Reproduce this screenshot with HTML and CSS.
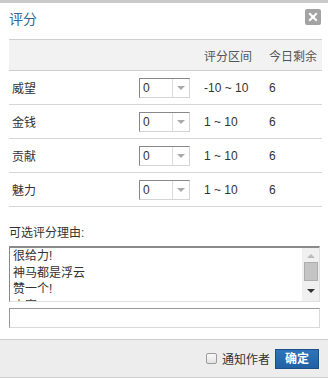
FILE: index.html
```html
<!DOCTYPE html>
<html>
<head>
<meta charset="utf-8">
<link rel="stylesheet" href="styles.css">
</head>
<body>
<div class="topbar"></div>
<div class="head">
  <span class="title">评分</span>
  <span class="close"><svg width="10" height="10" viewBox="0 0 10 10"><path d="M2 2 L8 8 M8 2 L2 8" stroke="#fff" stroke-width="2.2" stroke-linecap="square"/></svg></span>
</div>
<div class="table">
  <div class="row hdr">
    <span></span><span></span><span>评分区间</span><span>今日剩余</span>
  </div>
  <div class="row">
    <span class="lbl">威望</span>
    <span class="sel"><span class="val">0</span><span class="arr"></span></span>
    <span>-10 ~ 10</span><span>6</span>
  </div>
  <div class="row">
    <span class="lbl">金钱</span>
    <span class="sel"><span class="val">0</span><span class="arr"></span></span>
    <span>1 ~ 10</span><span>6</span>
  </div>
  <div class="row">
    <span class="lbl">贡献</span>
    <span class="sel"><span class="val">0</span><span class="arr"></span></span>
    <span>1 ~ 10</span><span>6</span>
  </div>
  <div class="row">
    <span class="lbl">魅力</span>
    <span class="sel"><span class="val">0</span><span class="arr"></span></span>
    <span>1 ~ 10</span><span>6</span>
  </div>
</div>
<div class="reason">
  <div class="rlabel">可选评分理由:</div>
  <div class="listbox">
    <div class="opts">
      <div>很给力!</div>
      <div>神马都是浮云</div>
      <div>赞一个!</div>
      <div>山寨</div>
    </div>
    <div class="sbar">
      <span class="up"></span>
      <span class="thumb"></span>
      <span class="down"></span>
    </div>
  </div>
  <div class="input"></div>
</div>
<div class="foot">
  <span class="chk"></span>
  <span class="notify">通知作者</span>
  <span class="btn">确定</span>
</div>
</body>
</html>
```
FILE: styles.css
```css
html, body {
  margin: 0;
  padding: 0;
  background: #fff;
}
body {
  font-family: "Liberation Sans", "Noto Sans CJK SC", sans-serif;
  font-size: 12px;
  color: #333;
  width: 328px;
}
.topbar {
  height: 3px;
  background: #c9c9c9;
}
.head {
  height: 36px;
  display: flex;
  align-items: center;
  justify-content: space-between;
  padding: 0 7px 0 9px;
}
.title {
  font-size: 14px;
  color: #336699;
  margin-top: -6px;
}
.close {
  width: 16px;
  height: 16px;
  background: #a3a3a3;
  border-radius: 2px;
  display: flex;
  align-items: center;
  justify-content: center;
  margin-top: -8px;
}
.table {
  margin: 0 6px 0 9px;
}
.row {
  display: grid;
  grid-template-columns: 130px 65px 65px 1fr;
  align-items: center;
  height: 33px;
  border-bottom: 1px solid #d6d6d6;
}
.row.hdr {
  height: 30px;
  background: #f2f2f2;
  border-top: 1px solid #cfcfcf;
  border-bottom: 1px solid #cfcfcf;
  color: #555;
}
.lbl {
  padding-left: 3px;
}
.sel {
  display: flex;
  width: 51px;
  height: 20px;
  box-sizing: border-box;
  border: 1px solid;
  border-color: #888 #d4d4d4 #d4d4d4 #888;
  background: #fff;
}
.val {
  width: 29px;
  padding-left: 3px;
  line-height: 18px;
  border-right: 1px solid #dcdcdc;
}
.arr {
  flex: 1;
  display: flex;
  align-items: center;
  justify-content: center;
}
.arr::before {
  content: "";
  border-left: 4px solid transparent;
  border-right: 4px solid transparent;
  border-top: 4px solid #aaa;
}
.reason {
  padding: 0 8px 0 9px;
}
.rlabel {
  margin-top: 18px;
  height: 21px;
  line-height: 16px;
}
.listbox {
  display: flex;
  height: 56px;
  box-sizing: border-box;
  border: 1px solid;
  border-top: 2px solid #8a8a8a;
  border-color: #8a8a8a #e0e0e0 #e0e0e0 #8a8a8a;
  overflow: hidden;
}
.opts {
  flex: 1;
  padding: 0 0 0 3px;
  line-height: 16.5px;
  overflow: hidden;
  color: #333;
}
.sbar {
  width: 17px;
  background: #f0f0f0;
  display: flex;
  flex-direction: column;
  align-items: center;
}
.up {
  margin-top: 6px;
  border-left: 4px solid transparent;
  border-right: 4px solid transparent;
  border-bottom: 4px solid #bbb;
}
.thumb {
  margin-top: 4px;
  width: 12px;
  height: 17px;
  background: #c4c4c4;
  border: 1px solid #adadad;
}
.down {
  margin-top: 8px;
  border-left: 4px solid transparent;
  border-right: 4px solid transparent;
  border-top: 4px solid #333;
}
.input {
  margin-top: 6px;
  height: 20px;
  box-sizing: border-box;
  border: 1px solid;
  border-color: #999 #d9d9d9 #d9d9d9 #999;
}
.foot {
  margin-top: 11px;
  height: 37px;
  background: #ededed;
  border-top: 1px solid #cfcfcf;
  border-bottom: 1px solid #cfcfcf;
  display: flex;
  align-items: center;
  justify-content: flex-end;
  padding-right: 9px;
}
.chk {
  width: 9px;
  height: 9px;
  border: 1px solid #9a9a9a;
  border-radius: 2px;
  background: linear-gradient(#f8f8f8, #e4e4e4);
  margin-right: 5px;
}
.notify {
  margin-right: 5px;
  color: #333;
  font-size: 12px;
}
.btn {
  width: 44px;
  height: 20px;
  box-sizing: border-box;
  border: 1px solid #1a4f88;
  background: linear-gradient(#2e74bb, #2161a3);
  color: #fff;
  font-weight: bold;
  text-align: center;
  line-height: 18px;
}
```
